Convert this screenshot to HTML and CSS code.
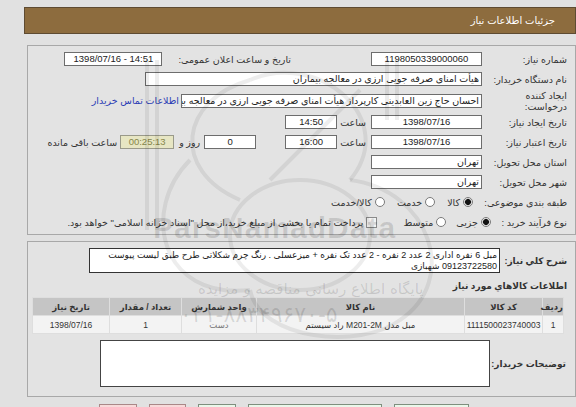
FILE: index.html
```html
<!DOCTYPE html>
<html lang="fa" dir="rtl">
<head>
<meta charset="utf-8">
<title>جزئیات اطلاعات نیاز</title>
<link rel="stylesheet" href="styles.css">
</head>
<body>
<div class="page">
  <div class="titlebar">جزئیات اطلاعات نیاز</div>

  <div class="panel p1">
    <div class="row">
      <div class="lbl">شماره نیاز:</div>
      <div class="inp w111 c">1198050339000060</div>
      <div class="txt ms80">تاریخ و ساعت اعلان عمومی:</div>
      <div class="inp w98 c ltr ms16">1398/07/16 - 14:51</div>
    </div>
    <div class="row">
      <div class="lbl">نام دستگاه خریدار:</div>
      <div class="inp w337">هیأت امنای صرفه جویی ارزی در معالجه بیماران</div>
    </div>
    <div class="row r3">
      <div class="lbl two">ایجاد کننده<br>درخواست:</div>
      <div class="inp w301">احسان حاج زین العابدینی کارپرداز هیأت امنای صرفه جویی ارزی در معالجه بیماران</div>
      <a class="link ms2">اطلاعات تماس خریدار</a>
    </div>
    <div class="row">
      <div class="lbl">تاریخ ایجاد نیاز:</div>
      <div class="inp w111 c">1398/07/16</div>
      <div class="txt ms5">ساعت</div>
      <div class="inp w52 c ms3">14:50</div>
    </div>
    <div class="row">
      <div class="lbl">تاریخ اعتبار نیاز:</div>
      <div class="inp w111 c">1398/07/16</div>
      <div class="txt ms5">ساعت</div>
      <div class="inp w52 c ms3">16:00</div>
      <div class="inp w52 c ms29">0</div>
      <div class="txt ms4">روز و</div>
      <div class="inp timer c ms5">00:25:13</div>
      <div class="txt ms3">ساعت باقی مانده</div>
    </div>
    <div class="row">
      <div class="lbl">استان محل تحویل:</div>
      <div class="inp w111">تهران</div>
    </div>
    <div class="row">
      <div class="lbl">شهر محل تحویل:</div>
      <div class="inp w111">تهران</div>
    </div>
    <div class="row">
      <div class="lbl">طبقه بندی موضوعی:</div>
      <span class="radio on ms9"></span><span class="opt">کالا</span>
      <span class="radio ms12"></span><span class="opt">خدمت</span>
      <span class="radio ms12"></span><span class="opt">کالا/خدمت</span>
    </div>
    <div class="row">
      <div class="lbl narrow">نوع فرآیند خرید :</div>
      <span class="radio on ms24"></span><span class="opt">جزیی</span>
      <span class="radio ms10"></span><span class="opt">متوسط</span>
      <span class="check ms26"></span><span class="opt">پرداخت تمام یا بخشی از مبلغ خرید،از محل "اسناد خزانه اسلامی" خواهد بود.</span>
    </div>
  </div>

  <div class="panel p2">
    <div class="desc-row">
      <div class="blbl dl">شرح کلي نياز:</div>
      <div class="desc">مبل 6 نفره اداری 2 عدد 2 نفره - 2 عدد تک نفره + میزعسلی . رنگ چرم شکلاتی طرح طبق لیست پیوست<br>09123722580 شهبازی</div>
    </div>
    <div class="blbl sec">اطلاعات کالاهاي مورد نياز</div>
    <table class="items">
      <colgroup>
        <col style="width:20px"><col style="width:77px"><col style="width:207px"><col style="width:74px"><col style="width:71px"><col style="width:76px">
      </colgroup>
      <thead>
        <tr><th>رديف</th><th>کد کالا</th><th>نام کالا</th><th>واحد شمارش</th><th>تعداد / مقدار</th><th>تاریخ نیاز</th></tr>
      </thead>
      <tbody>
        <tr><td>1</td><td>1111500023740003</td><td>مبل مدل M201-2M راد سیستم</td><td class="dim">دست</td><td>1</td><td>1398/07/16</td></tr>
      </tbody>
    </table>
    <div class="note-row">
      <div class="blbl nl">توضیحات خریدار:</div>
      <div class="note"></div>
    </div>
  </div>

  <div class="buttons">
    <span class="btn g w75"></span>
    <span class="btn g w134"></span>
    <span class="btn g w38"></span>
    <span class="btn p w37"></span>
    <span class="btn p w38"></span>
  </div>

  <div class="watermark">
    <svg class="wm-logo" width="400" height="300" viewBox="0 0 400 300">
      <g fill="none" stroke="#000" stroke-opacity="0.07" stroke-width="4">
        <line x1="47" y1="0" x2="47" y2="170"/>
        <line x1="57" y1="0" x2="57" y2="170"/>
        <line x1="287" y1="0" x2="287" y2="60"/>
        <line x1="297" y1="0" x2="297" y2="60"/>
        <path d="M150 20 C 220 -10, 300 60, 250 120"/>
        <path d="M90 100 C 40 150, 60 240, 150 230"/>
        <path d="M250 120 C 330 130, 360 220, 300 260"/>
        <path d="M150 20 C 80 40, 70 110, 140 140"/>
        <ellipse cx="200" cy="175" rx="70" ry="55"/>
        <path d="M170 120 L 260 30"/>
        <path d="M150 230 C 160 280, 260 290, 300 260"/>
      </g>
    </svg>
    <div class="wm1">ParsNamadData</div>
    <div class="wm2">پایگاه اطلاع رسانی مناقصه و مزایده</div>
    <div class="wm3">۰۲۱-۸۸۳۴۹۶۷۰-۵</div>
  </div>
</div>
</body>
</html>
```

FILE: styles.css
```css
html, body {
  margin: 0;
  padding: 0;
  background: #e1e1e1;
}
.page {
  position: relative;
  width: 576px;
  height: 407px;
  overflow: hidden;
  direction: rtl;
  padding-top: 7px;
  box-sizing: border-box;
  font-family: "Liberation Sans", "DejaVu Sans", sans-serif;
  font-size: 9.5px;
  color: #222;
}
.titlebar {
  margin-left: 8px;
  width: 552px;
  height: 27px;
  box-sizing: border-box;
  background: #8d6c3e;
  border: 1px solid #5e4b32;
  color: #fff;
  line-height: 25px;
  padding-right: 20px;
  font-size: 10px;
}
.panel {
  margin-left: 10px;
  width: 549px;
  box-sizing: border-box;
  border: 1px solid #a8a8a8;
  background: #e3e3e3;
}
.p1 {
  margin-top: 11px;
  padding: 3px 8px 2px 0;
}
.row {
  display: flex;
  align-items: center;
  height: 20px;
  white-space: nowrap;
}
.row.r3 { height: 23px; }
.lbl {
  width: 85px;
  flex: none;
  color: #333;
}
.lbl.two { line-height: 11px; }
.lbl.narrow { width: 52px; }
.txt { color: #333; }
.inp {
  flex: none;
  height: 14px;
  box-sizing: border-box;
  border: 1px solid #6d6d6d;
  background: #fff;
  line-height: 12px;
  padding: 0 2px;
  overflow: hidden;
  white-space: nowrap;
  color: #222;
}
.inp.c { text-align: center; }
.inp.ltr { direction: ltr; }
.w111 { width: 111px; }
.w98 { width: 98px; }
.w337 { width: 337px; }
.w301 { width: 301px; }
.w52 { width: 52px; }
.timer {
  width: 54px;
  background: #e7e6c3;
  border-color: #9a9a8a;
  color: #86864a;
}
.link { color: #2b3db5; }
.ms2 { margin-right: 2px; }
.ms3 { margin-right: 3px; }
.ms4 { margin-right: 4px; }
.ms5 { margin-right: 5px; }
.ms9 { margin-right: 9px; }
.ms10 { margin-right: 10px; }
.ms12 { margin-right: 12px; }
.ms16 { margin-right: 16px; }
.ms24 { margin-right: 24px; }
.ms26 { margin-right: 26px; }
.ms29 { margin-right: 29px; }
.ms80 { margin-right: 80px; }
.radio {
  flex: none;
  width: 10px;
  height: 10px;
  box-sizing: border-box;
  border: 1px solid #7a7a7a;
  border-radius: 50%;
  background: #fff;
}
.radio.on {
  background: radial-gradient(circle, #111 0 2.6px, #bbb 3.2px, #fff 4px);
}
.check {
  flex: none;
  width: 11px;
  height: 11px;
  box-sizing: border-box;
  border: 1px solid #8a8a8a;
  background: #f4f4f4;
}
.opt {
  margin-right: 3px;
  color: #333;
}
.p2 {
  margin-top: 6px;
  padding: 6px 0 9px 0;
}
.blbl {
  font-weight: bold;
  font-size: 9px;
  color: #333;
  white-space: nowrap;
}
.desc-row {
  display: flex;
  align-items: center;
  padding-right: 8px;
}
.dl { width: 67px; flex: none; }
.desc {
  width: 411px;
  height: 25px;
  box-sizing: border-box;
  border: 1px solid #333;
  background: #fff;
  font-size: 9px;
  line-height: 11px;
  padding: 1px 2px 0 2px;
  white-space: nowrap;
  overflow: hidden;
}
.sec {
  height: 16px;
  line-height: 16px;
  margin-top: 5px;
  padding-right: 8px;
}
.items {
  margin-top: 3px;
  margin-right: 11px;
  width: 526px;
  table-layout: fixed;
  border-collapse: separate;
  border-spacing: 1px;
  background: #dedede;
  font-size: 8.5px;
}
.items th {
  background: #c5c5c5;
  height: 17px;
  padding: 0;
  font-weight: bold;
  color: #333;
}
.items td {
  background: #f3f3f3;
  height: 17px;
  padding: 0;
  text-align: center;
  color: #333;
  white-space: nowrap;
  overflow: hidden;
}
.items td.dim { color: #777; }
.note-row {
  display: flex;
  align-items: center;
  padding-right: 9px;
  margin-top: 6px;
}
.nl { width: 76px; flex: none; }
.note {
  width: 390px;
  height: 47px;
  box-sizing: border-box;
  border: 1px solid #444;
  background: #fff;
}
.buttons {
  display: flex;
  padding-right: 107px;
  gap: 12px;
  margin-top: 7px;
}
.btn {
  height: 20px;
  box-sizing: border-box;
  border: 1px solid #888;
}
.btn.g { background: #eaf7ea; border-color: #7e8f7e; }
.btn.p { background: #f8dada; border-color: #a88; }
.w75 { width: 75px; }
.w134 { width: 134px; }
.w38 { width: 38px; }
.w37 { width: 37px; }
.watermark {
  position: absolute;
  inset: 0;
  pointer-events: none;
}
.wm-logo {
  position: absolute;
  left: 100px;
  top: 60px;
}
.wm1 {
  position: absolute;
  left: 153px;
  top: 211px;
  direction: ltr;
  font-family: "Liberation Sans", sans-serif;
  font-weight: bold;
  font-size: 30px;
  letter-spacing: 1px;
  color: rgba(0, 0, 0, 0.12);
}
.wm2 {
  position: absolute;
  left: 198px;
  top: 280px;
  font-family: "DejaVu Sans", sans-serif;
  font-size: 15px;
  color: rgba(0, 0, 0, 0.12);
}
.wm3 {
  position: absolute;
  left: 180px;
  top: 302px;
  direction: ltr;
  font-family: "DejaVu Sans", sans-serif;
  font-size: 22px;
  color: rgba(0, 0, 0, 0.12);
}
```
